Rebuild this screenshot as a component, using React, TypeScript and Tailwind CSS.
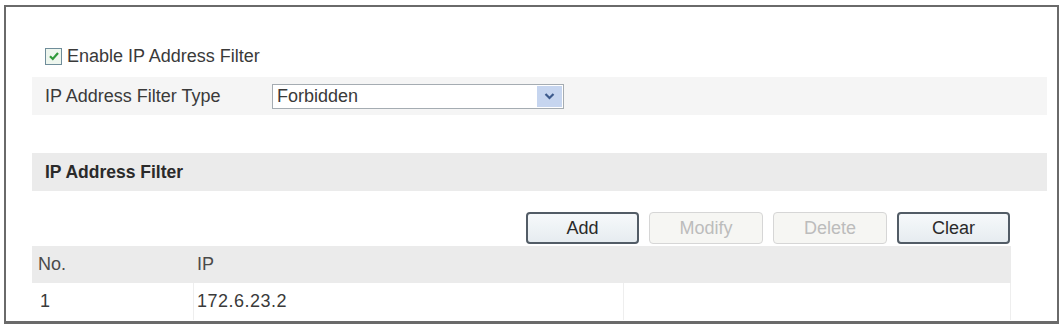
import React from "react";

const font = { fontFamily: '"Liberation Sans", Arial, sans-serif' };

function Btn({ label, disabled }: { label: string; disabled?: boolean }) {
  return (
    <button
      className={
        disabled
          ? "h-[32px] w-[114px] rounded-[4px] border border-[#d6d6d6] bg-[#f6f6f3] text-[18px] text-[#bcbcbc]"
          : "h-[32px] w-[113px] rounded-[4px] border-2 border-[#525c66] bg-gradient-to-b from-[#f6f9fb] to-[#e6ecf0] text-[18px] text-[#2a2a2a]"
      }
    >
      {label}
    </button>
  );
}

export default function App() {
  return (
    <div className="h-[328px] w-[1059px] bg-white pl-[4px] pt-[5px]" style={font}>
      <div className="h-[319px] w-[1055px] border-2 border-b-[3px] border-[#6a6a6a] pl-[26px] pr-[11px] pt-[38px] text-[18px] text-[#3a3a3a]">
        <div className="flex h-[22px] items-center pl-[13px]">
          <span className="flex h-[17px] w-[17px] items-center justify-center border border-[#6f8d9a] bg-[#eef6ee]">
            <svg width="12" height="12" viewBox="0 0 12 12">
              <path d="M2 6.2 L4.8 9 L10 3" fill="none" stroke="#2f9a3a" strokeWidth="2.2" />
            </svg>
          </span>
          <span className="ml-[5px]">Enable IP Address Filter</span>
        </div>
        <div className="mr-[-1px] mt-[10px] flex h-[38px] items-center bg-[#f5f5f5] pl-[13px]">
          <span className="w-[227px]">IP Address Filter Type</span>
          <div className="flex h-[25px] w-[292px] items-center justify-between border border-[#a5acb2] bg-white pl-[4px] pr-[1px]">
            <span>Forbidden</span>
            <span className="flex h-[21px] w-[25px] items-center justify-center bg-[#c6d5ef]">
              <svg width="11" height="8" viewBox="0 0 11 8">
                <path d="M1.5 2 L5.5 6 L9.5 2" fill="none" stroke="#3d5a8c" strokeWidth="2.2" />
              </svg>
            </span>
          </div>
        </div>
        <div className="mr-[-1px] mt-[38px] flex h-[38px] items-center bg-[#ebebeb] pl-[13px]">
          <span className="text-[17.5px] font-bold text-[#2a2a2a]">IP Address Filter</span>
        </div>
        <div className="mr-[36px] mt-[21px] flex justify-end gap-[10px]">
          <Btn label="Add" />
          <Btn label="Modify" disabled />
          <Btn label="Delete" disabled />
          <Btn label="Clear" />
        </div>
        <div className="mr-[35px] mt-[2px]">
          <div className="flex h-[37px] items-center bg-[#ebebeb] text-[#4a4a4a]">
            <span className="w-[162px] pl-[6px]">No.</span>
            <span className="pl-[3px]">IP</span>
          </div>
          <div className="flex h-[37px] border-r border-[#eeeeee]">
            <span className="flex w-[162px] items-center border-r border-[#eeeeee] pl-[8px]">1</span>
            <span className="flex w-[430px] items-center border-r border-[#eeeeee] pl-[3px] tracking-[0.5px]">172.6.23.2</span>
            <span className="flex-1" />
          </div>
        </div>
      </div>
    </div>
  );
}
